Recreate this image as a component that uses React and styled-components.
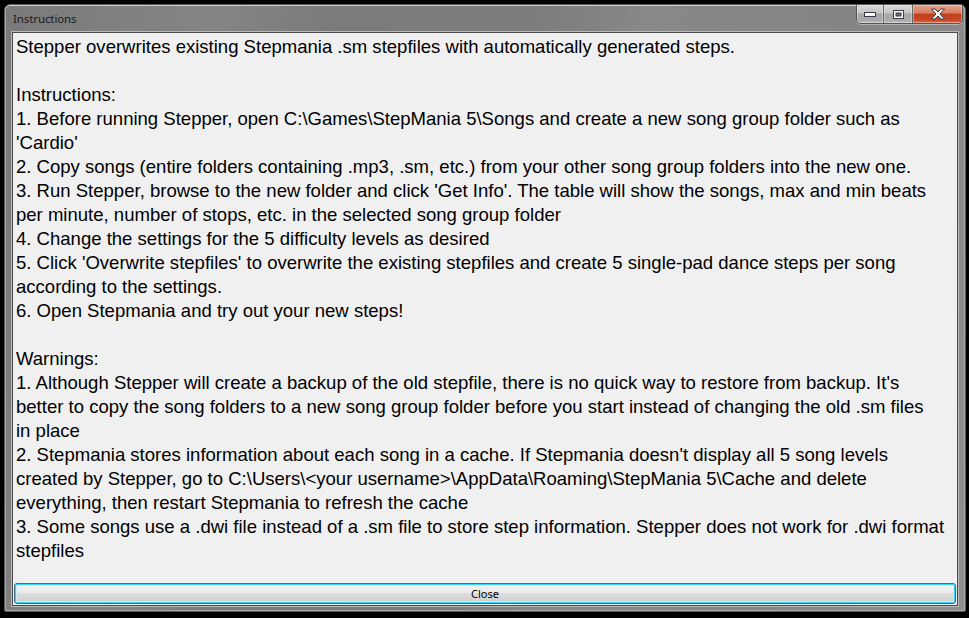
import React from "react";
import styled, { createGlobalStyle } from "styled-components";

const Global = createGlobalStyle`
  html, body { margin: 0; padding: 0; background: #000; }
  body { width: 969px; height: 618px; overflow: hidden; }
`;

const Screen = styled.div`
  width: 969px;
  height: 618px;
  background: #000;
  padding: 4px 3px 6px 4px;
  box-sizing: border-box;
  display: flex;
`;

const Frame = styled.div`
  flex: 1;
  display: flex;
  flex-direction: column;
  border-radius: 6px 6px 2px 2px;
  border: 1px solid #5a5a5a;
  box-shadow: inset 0 1px 0 #cfcfcf, inset 1px 0 0 #a8a8a8, inset -1px 0 0 #a8a8a8, inset 0 -1px 0 #a8a8a8;
  background: linear-gradient(100deg, #7a7a7a 0%, #858585 20%, #7b7b7b 30%, #7c7c7c 50%, #888 60%, #858585 80%, #8f8f8f 100%);
  padding: 0 7px 5px 7px;
  box-sizing: border-box;
`;

const TitleBar = styled.div`
  height: 27px;
  display: flex;
  align-items: flex-start;
  justify-content: space-between;
`;

const Title = styled.div`
  font-family: "Noto Sans", "DejaVu Sans", sans-serif;
  font-size: 11.5px;
  color: #1a1a1a;
  padding: 6px 0 0 1px;
  letter-spacing: -0.1px;
`;

const CaptionGroup = styled.div`
  display: flex;
  margin-right: -5px;
  border: 1px solid #555;
  border-top: none;
  border-radius: 0 0 5px 5px;
  overflow: hidden;
  height: 18px;
  box-shadow: 0 1px 0 rgba(255,255,255,0.35);
`;

const CaptionBtn = styled.div`
  width: ${p => p.$w}px;
  height: 18px;
  display: flex;
  align-items: center;
  justify-content: center;
  background: ${p => p.$red
    ? "linear-gradient(#e3a08e 0%, #d9805f 45%, #c33f1d 50%, #c84a26 85%, #d8765a 100%)"
    : "linear-gradient(#d8d8d8 0%, #c4c4c4 45%, #a6a6a6 50%, #aaa 85%, #bdbdbd 100%)"};
  border-left: ${p => p.$first ? "none" : "1px solid #666"};
  box-shadow: inset 0 0 0 1px rgba(255,255,255,0.35);
`;

const Client = styled.div`
  flex: 1;
  display: flex;
  flex-direction: column;
  background: #f0f0f0;
  border: 1px solid #4a4a4a;
  box-shadow: 0 0 0 1px #b9b9b9;
  padding: 1px 1px 0 1px;
  box-sizing: border-box;
`;

const TextArea = styled.div`
  flex: 1;
  font-family: "Liberation Sans", Arial, sans-serif;
  font-size: 18.55px;
  line-height: 24px;
  color: #000;
  padding: 1px 0 0 2px;
  white-space: nowrap;
  overflow: hidden;
`;

const Line = styled.div`
  height: 24px;
`;

const ButtonRow = styled.div`
  padding: 0 0 1px 0;
  display: flex;
`;

const CloseButton = styled.div`
  flex: 1;
  height: 21px;
  box-sizing: border-box;
  border: 1px solid #3b6e8a;
  border-radius: 3px;
  box-shadow: inset 0 0 0 1px #3ad2f5, inset 0 0 0 2px #c8eefb;
  background: linear-gradient(#f2f2f2 0%, #ebebeb 45%, #dddddd 50%, #cfcfcf 100%);
  display: flex;
  align-items: center;
  justify-content: center;
  font-family: "Noto Sans", "DejaVu Sans", sans-serif;
  font-size: 11px;
  color: #000;
`;

const lines = [
  "Stepper overwrites existing Stepmania .sm stepfiles with automatically generated steps.",
  "",
  "Instructions:",
  "1. Before running Stepper, open C:\\Games\\StepMania 5\\Songs and create a new song group folder such as",
  "'Cardio'",
  "2. Copy songs (entire folders containing .mp3, .sm, etc.) from your other song group folders into the new one.",
  "3. Run Stepper, browse to the new folder and click 'Get Info'. The table will show the songs, max and min beats",
  "per minute, number of stops, etc. in the selected song group folder",
  "4. Change the settings for the 5 difficulty levels as desired",
  "5. Click 'Overwrite stepfiles' to overwrite the existing stepfiles and create 5 single-pad dance steps per song",
  "according to the settings.",
  "6. Open Stepmania and try out your new steps!",
  "",
  "Warnings:",
  "1. Although Stepper will create a backup of the old stepfile, there is no quick way to restore from backup. It's",
  "better to copy the song folders to a new song group folder before you start instead of changing the old .sm files",
  "in place",
  "2. Stepmania stores information about each song in a cache. If Stepmania doesn't display all 5 song levels",
  "created by Stepper, go to C:\\Users\\<your username>\\AppData\\Roaming\\StepMania 5\\Cache and delete",
  "everything, then restart Stepmania to refresh the cache",
  "3. Some songs use a .dwi file instead of a .sm file to store step information. Stepper does not work for .dwi format",
  "stepfiles",
];

export default function App() {
  return (
    <>
      <Global />
      <Screen>
        <Frame>
          <TitleBar>
            <Title>Instructions</Title>
            <CaptionGroup>
              <CaptionBtn $w={26} $first>
                <svg width="12" height="6" viewBox="0 0 12 6">
                  <rect x="0.5" y="1.5" width="11" height="4" fill="#fff" stroke="#3a3a4a" />
                </svg>
              </CaptionBtn>
              <CaptionBtn $w={28}>
                <svg width="11" height="9" viewBox="0 0 11 9">
                  <rect x="0.5" y="0.5" width="10" height="8" fill="#fff" stroke="#3a3a4a" />
                  <rect x="3" y="3" width="5" height="3" fill="#6a6a7a" stroke="#3a3a4a" strokeWidth="1" />
                </svg>
              </CaptionBtn>
              <CaptionBtn $w={49} $red>
                <svg width="16" height="12" viewBox="0 0 16 12">
                  <path d="M1.5 1 L5 1 L8 4 L11 1 L14.5 1 L10 6 L14.5 11 L11 11 L8 8 L5 11 L1.5 11 L6 6 Z" fill="#fff" stroke="#3a3a4a" strokeWidth="1" strokeLinejoin="round" />
                </svg>
              </CaptionBtn>
            </CaptionGroup>
          </TitleBar>
          <Client>
            <TextArea>
              {lines.map((l, i) => (
                <Line key={i}>{l}</Line>
              ))}
            </TextArea>
            <ButtonRow>
              <CloseButton>Close</CloseButton>
            </ButtonRow>
          </Client>
        </Frame>
      </Screen>
    </>
  );
}
